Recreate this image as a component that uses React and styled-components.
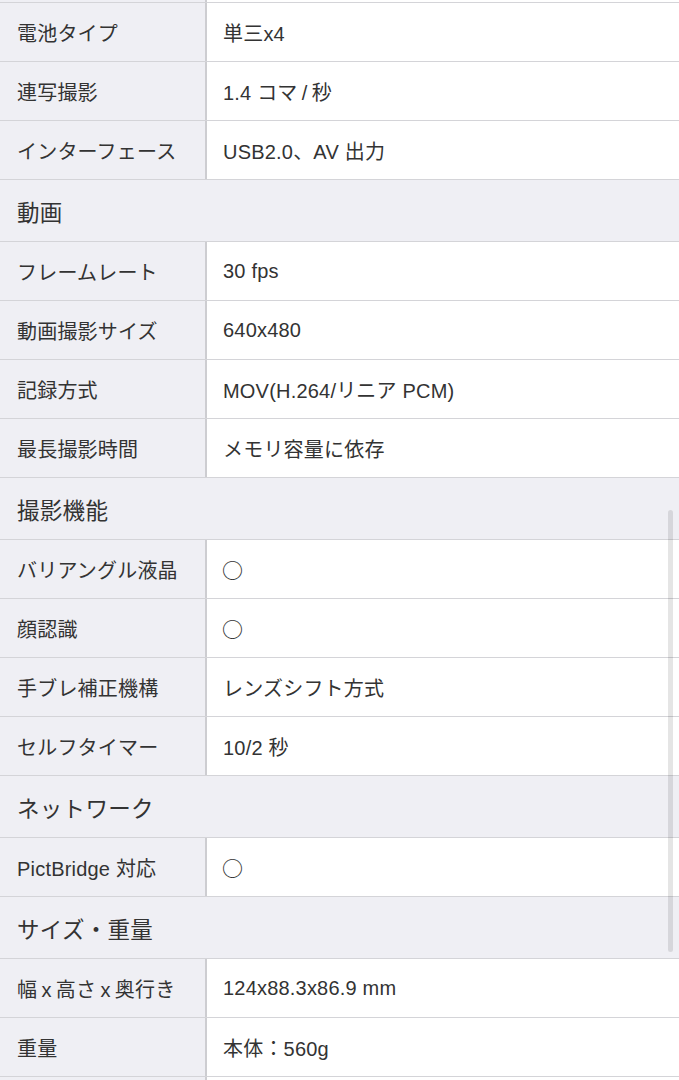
import React from 'react'
import styled, { createGlobalStyle } from 'styled-components'

const GlobalStyle = createGlobalStyle`
    html, body {
        margin: 0;
        padding: 0;
        background: #ffffff;
    }
    body {
        font-family: "Liberation Sans", "Noto Sans CJK JP", sans-serif;
        color: #333333;
        -webkit-font-smoothing: antialiased;
    }
`

const Screen = styled.div`
    position: relative;
    width: 679px;
    height: 1080px;
    overflow: hidden;
    background: #ffffff;
`

const SpecTable = styled.div`
    display: flex;
    flex-direction: column;
`

const Row = styled.div`
    display: grid;
    grid-template-columns: 205px 2px 1fr;
    height: ${props => props.stub ? '2px' : '58px'};
    border-bottom: 1px solid #d4d4d8;
`

const Label = styled.div`
    display: flex;
    align-items: center;
    padding-left: 17px;
    background-color: #efeff4;
    font-size: 20px;
    letter-spacing: 0.2px;
    white-space: nowrap;
    overflow: hidden;
`

const Divider = styled.div`
    background-color: #cdcdd1;
`

const Value = styled.div`
    display: flex;
    align-items: center;
    padding-left: 16px;
    background-color: #ffffff;
    font-size: 20px;
    letter-spacing: 0.2px;
    white-space: nowrap;
    overflow: hidden;
`

// the "supported" circle mark, taken from the CJK face so it has full width
const Mark = styled.span`
    font-family: "Noto Sans CJK JP", sans-serif;
    font-size: 21px;
    font-weight: 500;
    margin-left: -1px;
`

const Section = styled.div`
    display: flex;
    align-items: center;
    height: 61px;
    padding-left: 17px;
    background-color: #efeff4;
    border-bottom: 1px solid #d4d4d8;
    font-size: 22.5px;
    letter-spacing: 0.3px;
`

const ScrollThumb = styled.div`
    position: absolute;
    right: 6px;
    top: 510px;
    width: 5px;
    height: 442px;
    border-radius: 3px;
    background-color: rgba(0, 0, 0, 0.1);
`

const YES = 'yes'

const specs = [
    { type: 'row', label: '電池タイプ', value: '単三x4' },
    { type: 'row', label: '連写撮影', value: '1.4 コマ\u2009/\u2009秒' },
    { type: 'row', label: 'インターフェース', value: 'USB2.0、AV 出力' },
    { type: 'section', title: '動画' },
    { type: 'row', label: 'フレームレート', value: '30 fps' },
    { type: 'row', label: '動画撮影サイズ', value: '640x480' },
    { type: 'row', label: '記録方式', value: 'MOV(H.264/リニア PCM)' },
    { type: 'row', label: '最長撮影時間', value: 'メモリ容量に依存' },
    { type: 'section', title: '撮影機能' },
    { type: 'row', label: 'バリアングル液晶', value: YES },
    { type: 'row', label: '顔認識', value: YES },
    { type: 'row', label: '手ブレ補正機構', value: 'レンズシフト方式' },
    { type: 'row', label: 'セルフタイマー', value: '10/2 秒' },
    { type: 'section', title: 'ネットワーク' },
    { type: 'row', label: 'PictBridge 対応', value: YES },
    { type: 'section', title: 'サイズ・重量' },
    { type: 'row', label: '幅\u2009x\u2009高さ\u2009x\u2009奥行き', value: '124x88.3x86.9 mm' },
    { type: 'row', label: '重量', value: '本体：560g' },
]

const App = () => {
    return (
        <>
            <GlobalStyle />
            <Screen>
                <SpecTable>
                    {/* tail of the row scrolled off above */}
                    <Row stub>
                        <Label />
                        <Divider />
                        <Value />
                    </Row>
                    {specs.map((item, i) => item.type === 'section' ? (
                        <Section key={i}>{item.title}</Section>
                    ) : (
                        <Row key={i}>
                            <Label>{item.label}</Label>
                            <Divider />
                            <Value>{item.value === YES ? <Mark>○</Mark> : item.value}</Value>
                        </Row>
                    ))}
                    <Row>
                        <Label />
                        <Divider />
                        <Value />
                    </Row>
                </SpecTable>
                <ScrollThumb />
            </Screen>
        </>
    )
}

export default App
